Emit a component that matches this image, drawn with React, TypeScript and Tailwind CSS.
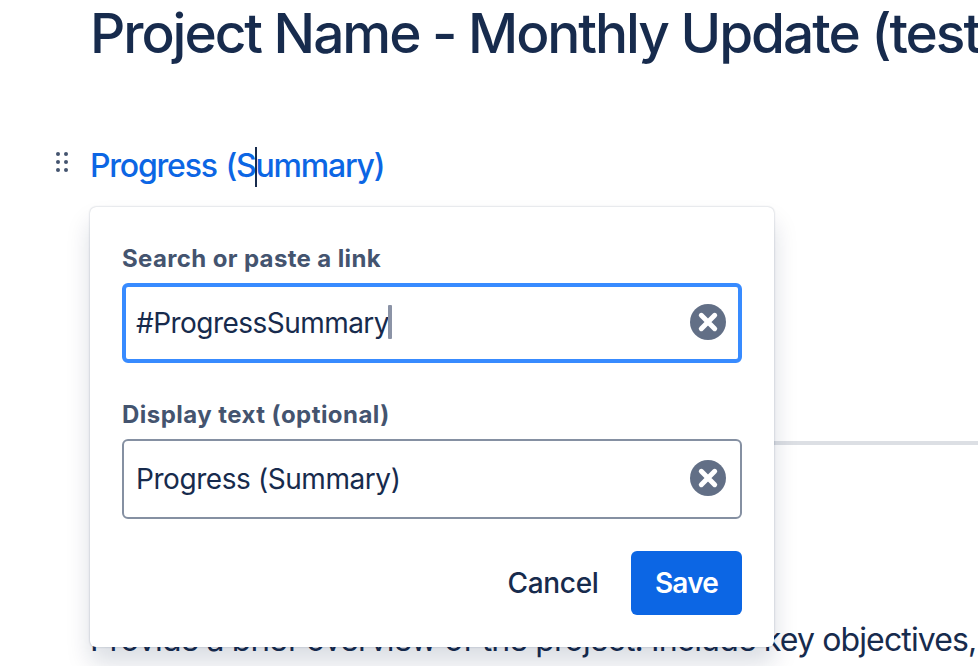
import React from "react";

function ClearIcon() {
  return (
    <svg className="mb-0.5" width="36" height="36" viewBox="0 0 36 36" aria-hidden="true">
      <circle cx="18" cy="18" r="18" fill="#626F86" />
      <path d="M11.3 11.3 24.7 24.7M24.7 11.3 11.3 24.7" stroke="#fff" strokeWidth="5" strokeLinecap="round" />
    </svg>
  );
}

function DragHandle() {
  return (
    <svg width="12" height="20" viewBox="0 0 12 20" fill="#44546F" aria-hidden="true">
      {[2, 10, 18].map((y) => (
        <g key={y}>
          <circle cx="2" cy={y} r="2" />
          <circle cx="10" cy={y} r="2" />
        </g>
      ))}
    </svg>
  );
}

function LinkPopup() {
  return (
    <div className="absolute top-[207px] left-[90px] flex h-[440px] w-[684px] flex-col rounded-md bg-white px-8 pt-9 pb-8 shadow-[0_16px_24px_rgba(9,30,66,0.15),0_0_2px_rgba(9,30,66,0.31)]">
      <label className="h-10 text-[24px] leading-8 font-bold text-[#44546F]">
        <span className="tracking-[0.36px]">Search or paste a link</span>
      </label>
      <div className="flex h-20 items-center justify-between rounded-md border-4 border-[#388BFF] pr-3 pl-[10px]">
        <div className="flex items-center text-[28px] leading-10">
          <span className="tracking-[-0.54px]">#ProgressSummary</span>
          <span className="-ml-px mb-0.5 h-[34px] w-1 rounded-[1px] bg-[#8B93A6]" />
        </div>
        <ClearIcon />
      </div>
      <label className="mt-9 h-10 text-[24px] leading-8 font-bold text-[#44546F]">
        <span className="tracking-[0.45px]">Display text (optional)</span>
      </label>
      <div className="flex h-20 items-center justify-between rounded-md border-2 border-[#8590A2] pr-[14px] pl-3">
        <span className="text-[28px] leading-10 tracking-[-0.43px]">Progress (Summary)</span>
        <ClearIcon />
      </div>
      <div className="mt-8 flex justify-end gap-[9px] text-[28px] leading-10 font-medium">
        <button className="h-16 w-[138px]">
          <span className="tracking-[-0.3px]">Cancel</span>
        </button>
        <button className="h-16 w-[111px] rounded-md bg-[#0C66E4] font-semibold text-white">
          <span className="tracking-[-0.8px]">Save</span>
        </button>
      </div>
    </div>
  );
}

export default function App() {
  return (
    <main className="relative h-[666px] w-[978px] overflow-hidden bg-white font-['Inter',sans-serif] text-[#172B4D]">
      <h1 className="pt-px pl-[90px] text-[55px] leading-[64px] font-medium whitespace-nowrap">
        <span className="tracking-[-2.05px]">Project Name - Monthly Update (test)</span>
      </h1>
      <div className="mt-20 flex h-10 pl-14">
        <div className="mt-[7px] mr-[22px]">
          <DragHandle />
        </div>
        <div className="relative pt-px text-[32px] leading-10 font-medium whitespace-nowrap text-[#0C66E4]">
          <span className="tracking-[-1.22px] [word-spacing:1.5px]">Progress (Summary)</span>
          <span className="absolute top-[2px] left-[165px] h-10 w-0.5 bg-[#172B4D]" />
        </div>
      </div>
      <hr className="mt-64 ml-[90px] h-1 border-0 bg-[#DCDFE4]" />
      <p className="mt-[175px] pl-[90px] text-[32px] leading-10 whitespace-nowrap">
        <span className="tracking-[-0.87px]">Provide a brief overview of the project. Include key objectives,</span>
      </p>
      <LinkPopup />
    </main>
  );
}
